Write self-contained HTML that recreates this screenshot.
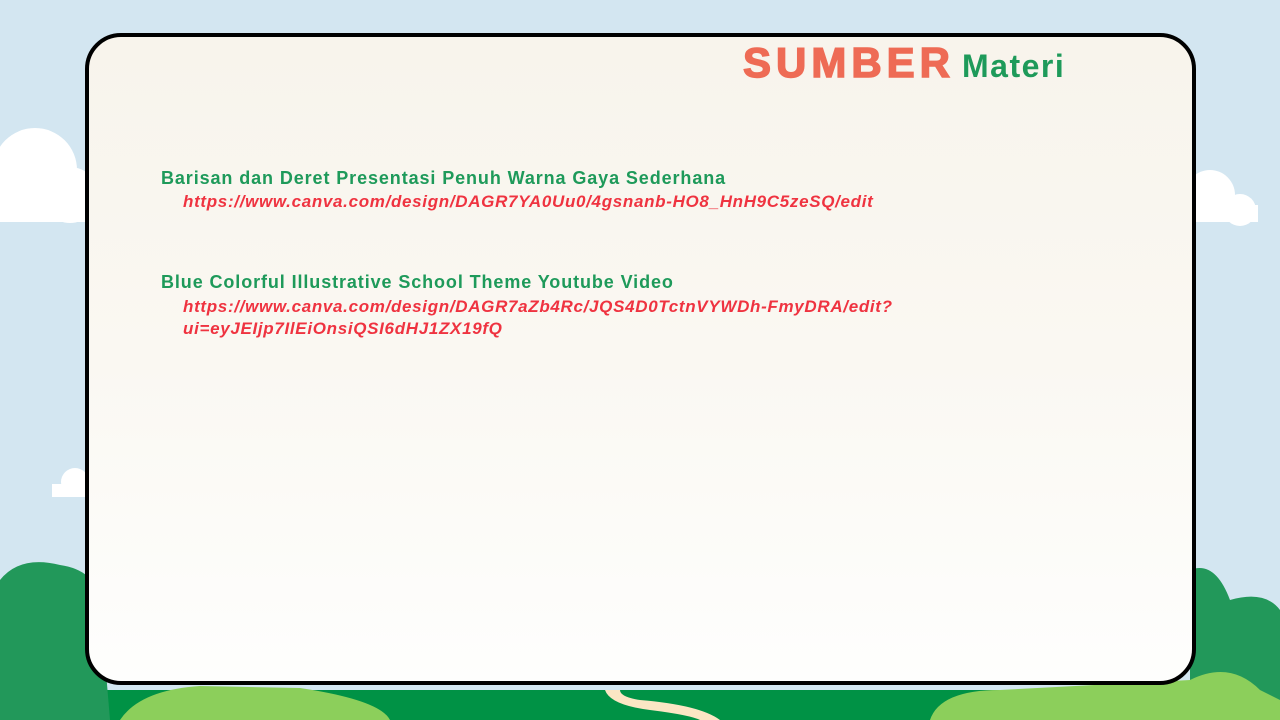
<!DOCTYPE html>
<html><head><meta charset="utf-8"><style>
body{margin:0;width:1280px;height:720px;overflow:hidden;background:#d3e6f1;position:relative;font-family:"Liberation Sans",sans-serif}
.a{position:absolute}
.card{position:absolute;left:85px;top:33px;width:1111px;height:652px;border:4px solid #000;border-radius:36px;background:linear-gradient(180deg,#f8f4ec 0%,#faf8f2 50%,#fefefd 100%);box-sizing:border-box}
.t{position:absolute;font-weight:bold;color:#1e9a5a;font-size:18px;letter-spacing:0.9px}
.u{position:absolute;font-weight:bold;font-style:italic;color:#ef3340;font-size:17px;line-height:22px;letter-spacing:0.68px}
</style></head><body>
<svg class="a" style="left:0;top:0" width="1280" height="720">
<g fill="#fff"><circle cx="35" cy="170" r="42"/><circle cx="70" cy="195" r="28"/><rect x="0" y="190" width="100" height="32"/>
<circle cx="1210" cy="195" r="25"/><circle cx="1240" cy="210" r="16"/><rect x="1190" y="205" width="68" height="17"/>
<circle cx="75" cy="482" r="14"/><rect x="52" y="484" width="40" height="13"/></g>
<rect x="0" y="690" width="1280" height="30" fill="#009245"/>
<path d="M120 720 Q140 690 200 686 L300 688 Q380 700 390 720Z" fill="#8ccf5b"/>
<path d="M0 580 Q20 555 60 565 Q95 570 100 600 L110 720 L0 720Z" fill="#22985a"/>
<path d="M1190 570 Q1215 560 1230 600 Q1265 590 1280 610 L1280 720 L1190 720Z" fill="#22985a"/>
<path d="M930 720 Q940 690 1000 690 L1190 680 Q1230 660 1260 690 L1280 700 L1280 720Z" fill="#8ccf5b"/>
<path d="M605 690 Q610 705 650 710 Q690 715 700 720 L720 720 Q700 705 640 700 Q620 697 620 690Z" fill="#fbe6c4"/>
</svg>
<div class="card"></div>
<div class="a" style="left:743px;top:40px;font-weight:bold;font-size:42px;line-height:46px;color:#ee6b55;letter-spacing:5px;-webkit-text-stroke:1.5px #ee6b55">SUMBER</div>
<div class="a" style="left:962px;top:48px;font-weight:bold;font-size:32px;line-height:36px;color:#1e9a5a;letter-spacing:1.5px">Materi</div>
<div class="t" style="left:161px;top:168px">Barisan dan Deret Presentasi Penuh Warna Gaya Sederhana</div>
<div class="u" style="left:183px;top:191px">https://www.canva.com/design/DAGR7YA0Uu0/4gsnanb-HO8_HnH9C5zeSQ/edit</div>
<div class="t" style="left:161px;top:272px">Blue Colorful Illustrative School Theme Youtube Video</div>
<div class="u" style="left:183px;top:296px">https://www.canva.com/design/DAGR7aZb4Rc/JQS4D0TctnVYWDh-FmyDRA/edit?<br>ui=eyJEIjp7IlEiOnsiQSI6dHJ1ZX19fQ</div>
</body></html>
